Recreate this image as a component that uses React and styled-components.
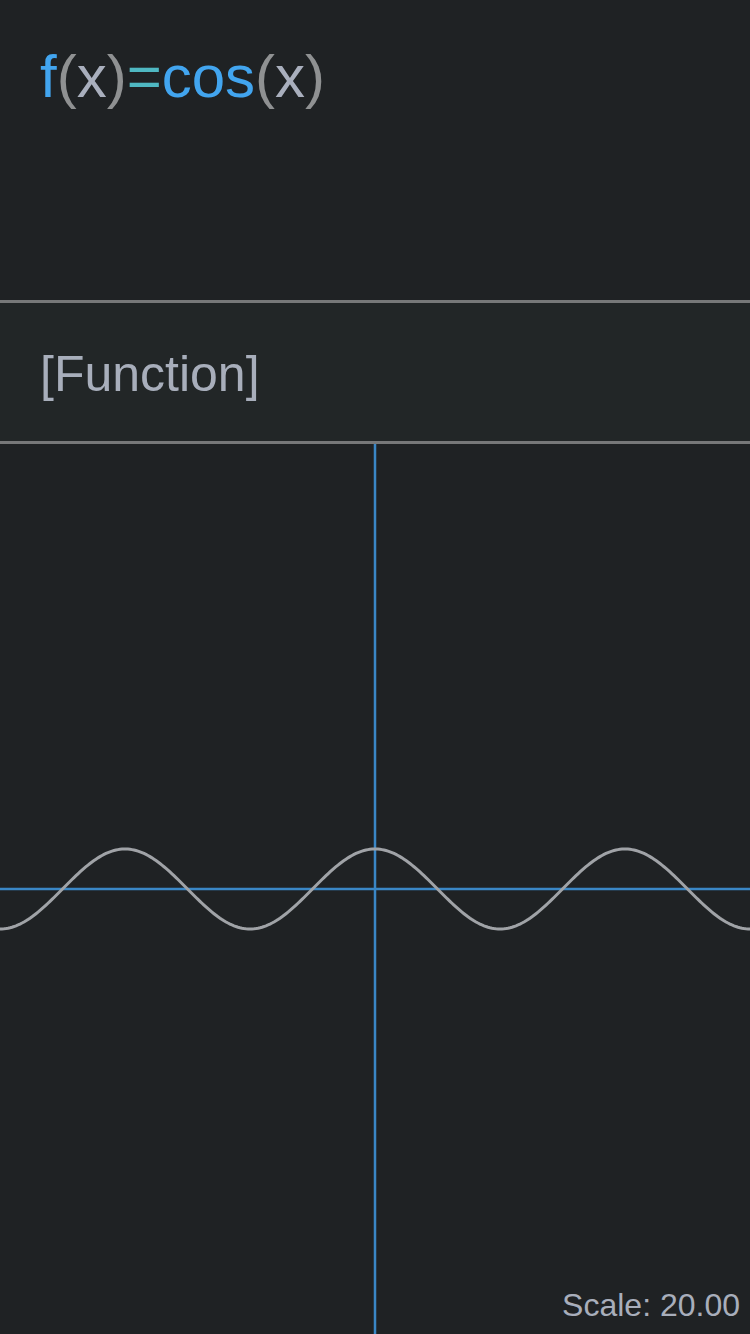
import React from 'react'
import styled, { createGlobalStyle } from 'styled-components'

const GlobalStyle = createGlobalStyle`
  html, body {
    margin: 0;
    padding: 0;
    background: #1f2224;
    overflow: hidden;
  }
  * { box-sizing: border-box; }
`

const Page = styled.div`
  width: 750px;
  height: 1334px;
  display: flex;
  flex-direction: column;
  background: #1f2224;
  font-family: "Liberation Sans", Arial, sans-serif;
`

const Editor = styled.div`
  height: 300px;
  padding: 42px 40px 0;
  font-size: 60px;
  line-height: 69px;
  white-space: nowrap;
`

const Tok = styled.span`
  color: ${p => p.$color};
`

const Output = styled.div`
  height: 144px;
  border-top: 3px solid #777879;
  border-bottom: 3px solid #777879;
  background: #222627;
  display: flex;
  align-items: center;
  padding: 3px 40px 0;
  font-size: 50px;
  color: #a8aebb;
`

const Graph = styled.div`
  position: relative;
  flex: 1;
`

const ScaleLabel = styled.div`
  position: absolute;
  right: 10px;
  bottom: 10px;
  font-size: 32px;
  color: #a8aebb;
`

const colors = {
  fn: '#42a5ef',
  paren: '#8f9192',
  arg: '#a9afbd',
  op: '#4fb8c2'
}

const W = 750
const H = 890
const unit = 250 / (2 * Math.PI)

const curve = () => {
  const pts = []
  for (let x = -2; x <= W + 2; x += 2) {
    const y = H / 2 - 40 * Math.cos((x - W / 2) / unit)
    pts.push(`${x},${y.toFixed(2)}`)
  }
  return 'M' + pts.join(' L')
}

export default function App() {
  return (
    <>
      <GlobalStyle />
      <Page>
        <Editor>
          <Tok $color={colors.fn}>f</Tok>
          <Tok $color={colors.paren}>(</Tok>
          <Tok $color={colors.arg}>x</Tok>
          <Tok $color={colors.paren}>)</Tok>
          <Tok $color={colors.op}>=</Tok>
          <Tok $color={colors.fn}>cos</Tok>
          <Tok $color={colors.paren}>(</Tok>
          <Tok $color={colors.arg}>x</Tok>
          <Tok $color={colors.paren}>)</Tok>
        </Editor>
        <Output>[Function]</Output>
        <Graph>
          <svg width={W} height={H} viewBox={`0 0 ${W} ${H}`} style={{ display: 'block' }}>
            <line x1="0" y1={H / 2} x2={W} y2={H / 2} stroke="#3a87c6" strokeWidth="2.5" />
            <line x1={W / 2} y1="0" x2={W / 2} y2={H} stroke="#3a87c6" strokeWidth="2.5" />
            <path d={curve()} fill="none" stroke="#a0a3a7" strokeWidth="3" />
          </svg>
          <ScaleLabel>Scale: 20.00</ScaleLabel>
        </Graph>
      </Page>
    </>
  )
}
